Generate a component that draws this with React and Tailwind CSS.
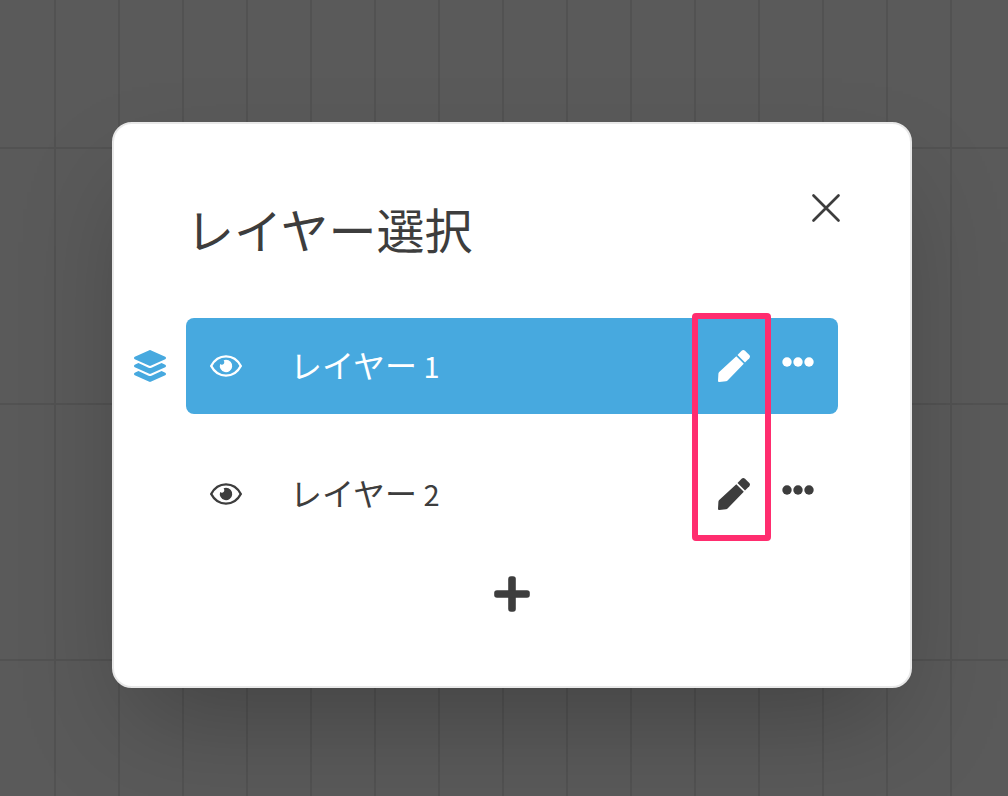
import React from "react";

function LayersIcon() {
  return (
    <svg viewBox="0 0 512 512" className="size-8" fill="currentColor" aria-hidden="true">
      <path d="M12.41 148.02l232.94 105.67c6.8 3.09 14.49 3.09 21.29 0l232.94-105.67c16.55-7.51 16.55-32.52 0-40.03L266.65 2.31a25.607 25.607 0 0 0-21.29 0L12.41 107.98c-16.55 7.51-16.55 32.53 0 40.04zm487.18 88.28l-58.09-26.33-161.64 73.27c-7.56 3.43-15.59 5.17-23.86 5.17s-16.29-1.74-23.86-5.17L70.51 209.97l-58.1 26.33c-16.55 7.5-16.55 32.5 0 40l232.94 105.59c6.8 3.08 14.49 3.08 21.29 0L499.59 276.3c16.55-7.5 16.55-32.5 0-40zm0 127.8l-57.87-26.23-161.86 73.37c-7.56 3.43-15.59 5.17-23.86 5.17s-16.29-1.74-23.86-5.17L70.29 337.87 12.41 364.1c-16.55 7.5-16.55 32.5 0 40l232.94 105.59c6.8 3.08 14.49 3.08 21.29 0L499.59 404.1c16.55-7.5 16.55-32.5 0-40z" />
    </svg>
  );
}

function EyeIcon() {
  return (
    <svg viewBox="0 0 32 32" className="size-8" fill="none" aria-hidden="true">
      <path
        d="M1.2 16C4.4 9.9 9.6 6.4 16 6.4S27.6 9.9 30.8 16C27.6 22.1 22.4 25.600 16 25.600S4.400 22.100 1.200 16Z"
        stroke="currentColor"
        strokeWidth="2.400"
        strokeLinejoin="round"
      />
      <path
        d="M16 9.800A6.200 6.200 0 1 1 10.100 14.100C11.300 14.900 13 14.800 13.800 13.800C14.600 12.700 14.300 11.300 13.600 10.300C14.300 10 15.100 9.800 16 9.800Z"
        fill="currentColor"
      />
    </svg>
  );
}

function PencilIcon() {
  return (
    <svg viewBox="0 0 32 32" className="size-8" fill="currentColor" aria-hidden="true">
      <path d="M23.600 .7Q25.300 -.7 27 .7L31.300 5Q32.700 6.600 31.300 8.200L27 12.500L19.500 5Z" />
      <path d="M18.300 6.200L25.800 13.700L9.800 30.300Q9.100 31.100 8 31.200L1.300 32Q0 32.100 0 30.700L.4 23.800Q.5 22.800 1.200 22.100Z" />
    </svg>
  );
}

function DotsIcon() {
  return (
    <svg viewBox="0 0 32 32" className="size-8" fill="currentColor" aria-hidden="true">
      <circle cx="5" cy="16" r="4.700" />
      <circle cx="16" cy="16" r="4.700" />
      <circle cx="27" cy="16" r="4.700" />
    </svg>
  );
}

function LayerRow({ number, active }) {
  const name = `レイヤー ${number}`;
  return (
    <li className="relative">
      {active && (
        <span className="absolute top-8 -left-13 text-[#47a9df]">
          <LayersIcon />
        </span>
      )}
      <div
        className={
          active
            ? "flex h-24 items-center rounded-lg bg-[#47a9df] px-6 text-white"
            : "flex h-24 items-center rounded-lg px-6 text-[#3d3d3d]"
        }
      >
        <button type="button" aria-label={`${name} の表示切替`}>
          <EyeIcon />
        </button>
        <button type="button" className="ml-12 flex-1 pb-1 text-left text-[32px] leading-12">
          レイヤー<span className="text-[29px]"> {number}</span>
        </button>
        <button type="button" aria-label={`${name} を編集`}>
          <PencilIcon />
        </button>
        <button type="button" aria-label={`${name} のメニュー`} className="ml-8 pb-2">
          <DotsIcon />
        </button>
      </div>
    </li>
  );
}

export default function App() {
  return (
    <div className="flex min-h-screen items-center justify-center bg-[#5a5a5a] bg-[linear-gradient(to_right,#525252_2px,transparent_2px),linear-gradient(to_bottom,#525252_2px,transparent_2px)] bg-[size:64px_256px] bg-[position:54px_147px] pt-[14px] pl-4 font-['Noto_Sans_CJK_JP','Noto_Sans',sans-serif]">
      <section
        role="dialog"
        aria-labelledby="layer-title"
        className="w-full max-w-[800px] rounded-[20px] border-2 border-[#e8e8e8] bg-white px-18 pt-16 pb-18 text-[#3d3d3d] shadow-[0_50px_100px_-20px_rgba(0,0,0,0.25)]"
      >
        <header className="flex items-start justify-between">
          <h1 id="layer-title" className="pt-1 text-[48px] leading-18">
            レイヤー選択
          </h1>
          <button type="button" aria-label="閉じる" className="-mr-1 pt-1">
            <svg viewBox="0 0 32 32" className="size-8" fill="none" stroke="currentColor" strokeWidth="2.700" strokeLinecap="round" aria-hidden="true">
              <path d="M3.500 3.500L28.500 28.500M28.500 3.500L3.500 28.500" />
            </svg>
          </button>
        </header>
        <div className="relative mt-[54px]">
          <ul className="flex flex-col gap-8">
            <LayerRow number={1} active />
            <LayerRow number={2} />
          </ul>
          <div className="pointer-events-none absolute -top-[5px] right-[67px] h-57 w-[79px] rounded-[4px] border-6 border-[#ff2d6f]" />
        </div>
        <button type="button" aria-label="レイヤーを追加" className="mx-auto mt-8 block">
          <svg viewBox="0 0 40 40" className="size-10" fill="currentColor" aria-hidden="true">
            <rect x="16.200" y="2.200" width="7.600" height="35.600" rx="2.800" />
            <rect x="2.200" y="16.200" width="35.600" height="7.600" rx="2.800" />
          </svg>
        </button>
      </section>
    </div>
  );
}
